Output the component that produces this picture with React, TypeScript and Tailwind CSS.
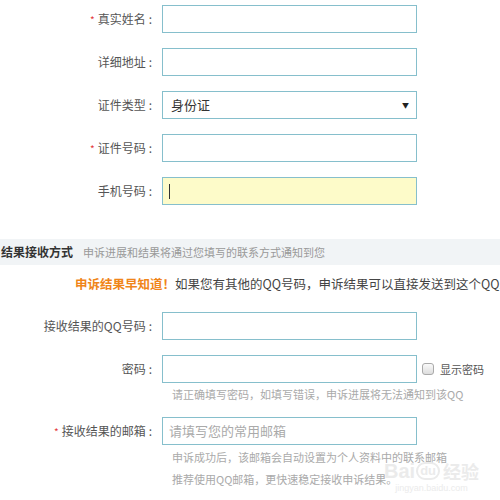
const font = { fontFamily: '"Noto Sans CJK SC", "Noto Sans", sans-serif' };

function Label({ text, required }: { text: string; required?: boolean }) {
  return (
    <div className="w-[152px] shrink-0 text-right text-[12px] leading-[20px] text-[#555]">
      {required && <span className="mr-[3px] text-[10px] text-[#e4393c]">*</span>}
      {text}
      <span className="ml-[3px]">:</span>
    </div>
  );
}

function Field({ className = '', children }: { className?: string; children?: React.ReactNode }) {
  return (
    <div
      className={`ml-[10px] flex h-[28px] w-[255px] shrink-0 items-center border border-[#86bfcc] px-[6px] text-[13px] ${className}`}
    >
      {children}
    </div>
  );
}

export default function App() {
  return (
    <div className="relative h-[500px] w-[500px] overflow-hidden bg-white" style={font}>
      <div className="pt-[5px]">
        <div className="flex items-center">
          <Label text="真实姓名" required />
          <Field className="bg-white" />
        </div>
        <div className="mt-[15px] flex items-center">
          <Label text="详细地址" />
          <Field className="bg-white" />
        </div>
        <div className="mt-[15px] flex items-center">
          <Label text="证件类型" />
          <Field className="h-[26px] justify-between bg-white text-[#333]">
            <span className="pl-[2px]">身份证</span>
            <span className="mr-[1px] text-[7px] text-[#222]">▼</span>
          </Field>
        </div>
        <div className="mt-[15px] flex items-center">
          <Label text="证件号码" required />
          <Field className="bg-white" />
        </div>
        <div className="mt-[15px] flex items-center">
          <Label text="手机号码" />
          <Field className="bg-[#fdfbc9]">
            <span className="h-[15px] w-px bg-[#333]" />
          </Field>
        </div>
      </div>

      <div className="mt-[34px] flex h-[26px] items-center whitespace-nowrap bg-[#f1f4f6]">
        <span className="ml-[1px] text-[12px] font-bold text-[#333]">结果接收方式</span>
        <span className="ml-[10px] text-[11px] text-[#999]">申诉进展和结果将通过您填写的联系方式通知到您</span>
      </div>

      <div className="mt-[9px] flex h-[20px] items-center whitespace-nowrap pl-[75px] text-[12.5px]">
        <span className="font-bold text-[#f08519]">申诉结果早知道！</span>
        <span className="text-[#444]">如果您有其他的QQ号码，申诉结果可以直接发送到这个QQ上</span>
      </div>

      <div className="mt-[18px] flex items-center">
        <Label text="接收结果的QQ号码" />
        <Field className="bg-white" />
      </div>

      <div className="mt-[15px] flex items-center">
        <Label text="密码" />
        <Field className="bg-white" />
        <span className="ml-[5px] h-[12px] w-[12px] shrink-0 rounded-[3px] border border-[#aaa] bg-gradient-to-b from-[#fafafa] to-[#ddd]" />
        <span className="ml-[6px] whitespace-nowrap text-[11px] text-[#555]">显示密码</span>
      </div>
      <div className="mt-[3px] pl-[172px] text-[11px] leading-[16px] text-[#aaa]">
        请正确填写密码，如填写错误，申诉进展将无法通知到该QQ
      </div>

      <div className="mt-[15px] flex items-center">
        <Label text="接收结果的邮箱" required />
        <Field className="bg-white text-[#aaa]">请填写您的常用邮箱</Field>
      </div>
      <div className="mt-[1px] pl-[172px] text-[11px] leading-[22px] text-[#aaa]">
        <div>申诉成功后，该邮箱会自动设置为个人资料中的联系邮箱</div>
        <div>推荐使用QQ邮箱，更快速稳定接收申诉结果。</div>
      </div>

      <div className="pointer-events-none absolute left-[384px] top-[460px] flex flex-col items-center text-[#ebebeb]">
        <div
          className="flex items-center text-[20px] font-bold leading-[22px]"
          style={{ fontFamily: '"Liberation Sans", sans-serif' }}
        >
          <span>Bai</span>
          <span className="ml-[1px] rounded-full border-2 border-[#ebebeb] px-[2px] text-[13px] leading-[14px]">du</span>
          <span className="ml-[3px] text-[18px]" style={font}>
            经验
          </span>
        </div>
        <div className="text-[9px] leading-[12px]" style={{ fontFamily: '"Liberation Sans", sans-serif' }}>
          jingyan.baidu.com
        </div>
      </div>
    </div>
  );
}
